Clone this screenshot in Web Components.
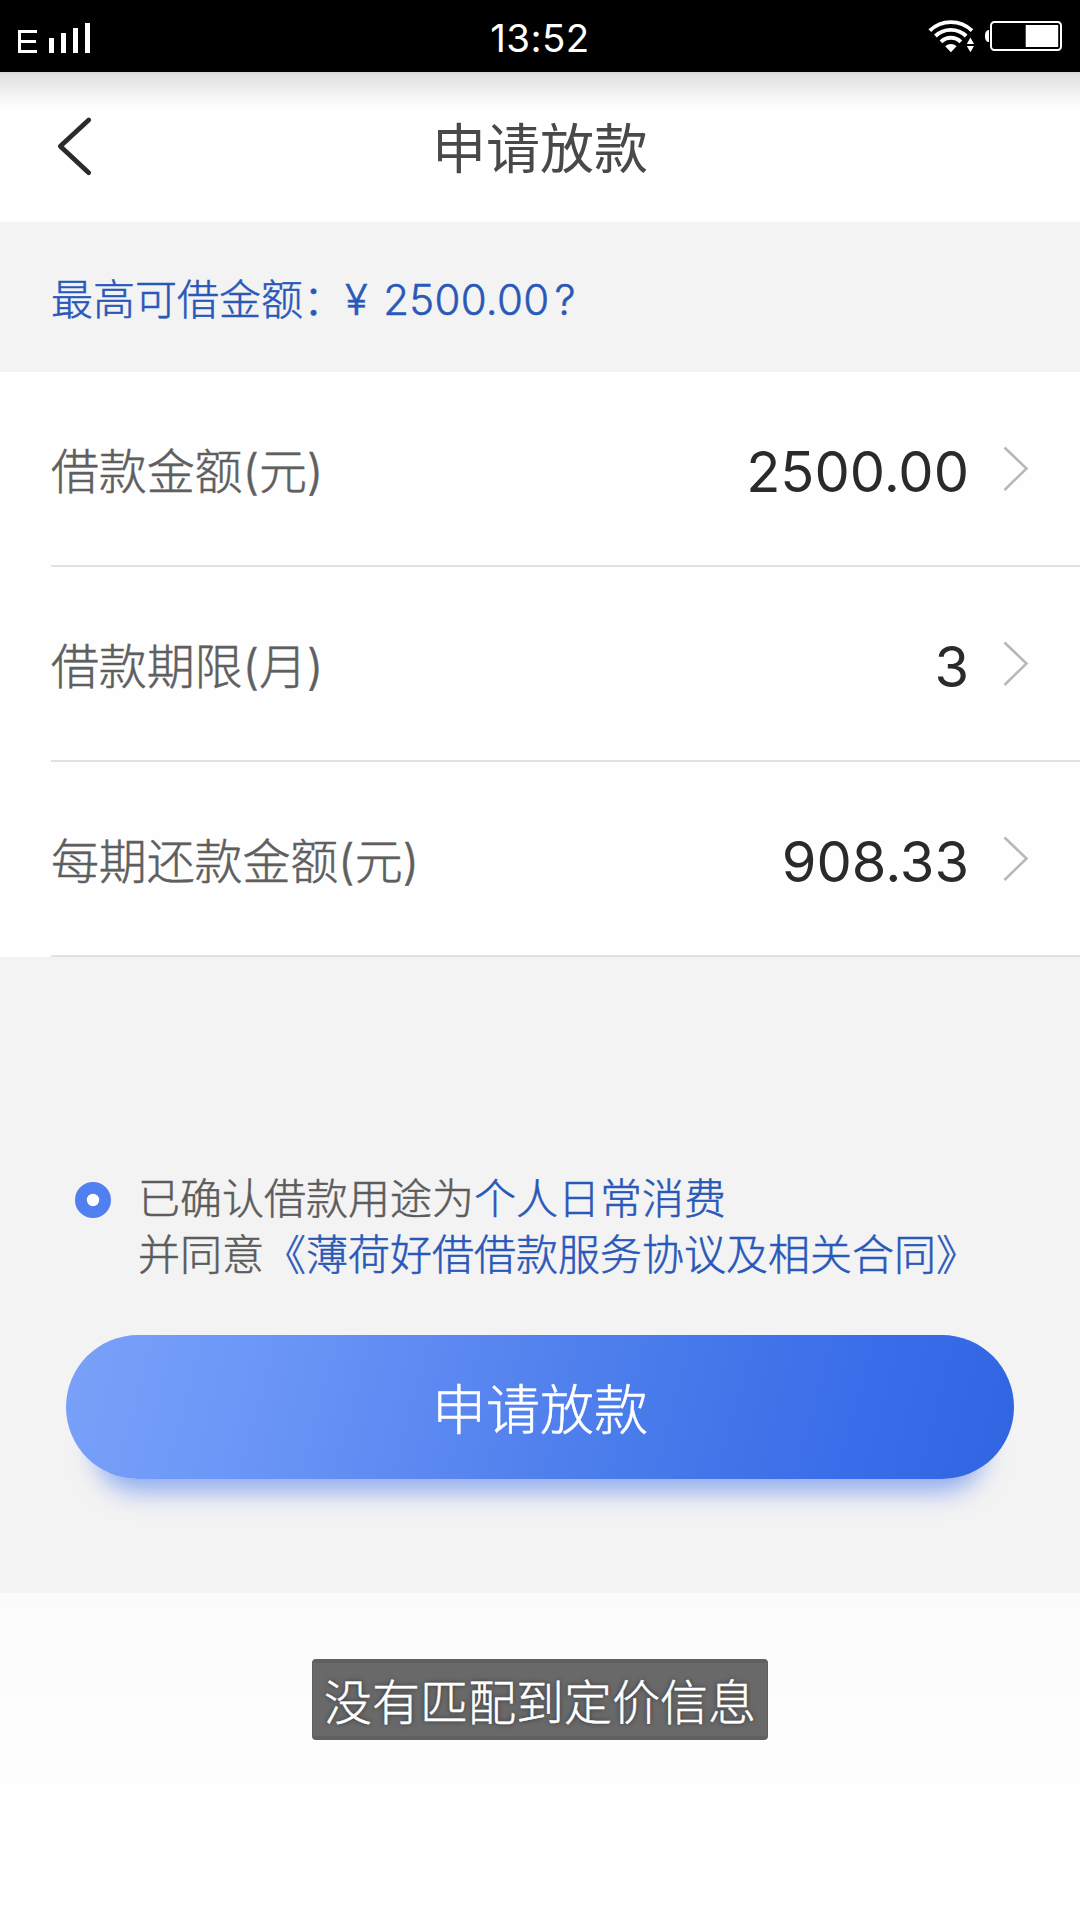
<!DOCTYPE html>
<html lang="zh-CN">
<head>
<meta charset="utf-8">
<title>申请放款</title>
<style>
html,body{margin:0;padding:0;background:#fcfcfc}
body{width:1080px;height:1920px;overflow:hidden;font-family:Inter,"Noto Sans CJK SC",sans-serif}
</style>
</head>
<body>
<loan-page>
  <status-bar>13:52</status-bar>
  <nav-header>申请放款</nav-header>
  <quota-note>最高可借金额：<span style="letter-spacing:1.8px">¥ </span><span style="letter-spacing:.3px">2500.00</span><span style="margin-left:5px">?</span></quota-note>
  <loan-row label="借款金额(元)">2500.00</loan-row>
  <loan-row label="借款期限(月)">3</loan-row>
  <loan-row label="每期还款金额(元)">908.33</loan-row>
  <loan-footer>
    <consent-box>
      <span slot="first">已确认借款用途为<link-text>个人日常消费</link-text></span>
      <span slot="second">并同意<link-text>《薄荷好借借款服务协议及相关合同》</link-text></span>
    </consent-box>
    <submit-button>申请放款</submit-button>
  </loan-footer>
  <toast-area>没有匹配到定价信息</toast-area>
</loan-page>
<script>
const define = (name, html, setup) => customElements.define(name, class extends HTMLElement {
  constructor() {
    super();
    this.attachShadow({ mode: 'open' }).innerHTML = html;
  }
  connectedCallback() { if (setup) setup(this, this.shadowRoot); }
});

define('loan-page', `
<style>:host{display:flex;flex-direction:column;width:1080px;height:1920px}</style><slot></slot>`);

define('status-bar', `
<style>
:host{display:grid;grid-template-columns:1fr auto 1fr;height:72px;background:#000;color:#fff}
svg{display:block}
.time{font-size:38.5px;line-height:72px;padding-top:2px;height:70px;letter-spacing:.4px}
.right{justify-self:end}
</style>
<svg width="120" height="72" fill="#fff"><path d="M18 30h19v3H21v7h15v3H21v7h16v3H18zM49 38h5v15h-5zM61 33h5v20h-5zM73 28h5v25h-5zM85 23h5v30h-5z"/></svg>
<div class="time"><slot></slot></div>
<svg class="right" width="160" height="72" viewBox="920 0 160 72">
  <g fill="none" stroke="#fff" stroke-width="3.9">
    <path d="M929.800 30.700A30.3 30.3 0 0 1 972 30.700"/>
    <path d="M935.4 36A22.3 22.3 0 0 1 966.2 36"/>
    <path d="M941 41.8A14.3 14.3 0 0 1 960.8 41.8"/>
  </g>
  <path fill="#fff" d="M950.9 52.3L945.2 46.3A8.2 8.2 0 0 1 956.6 46.3ZM970.4 37.5l3.6 6.5h-7.2zM970.4 52.2l3.6-6.3h-7.2z"/>
  <rect x="991" y="22" width="70" height="28" rx="3.5" fill="none" stroke="#fff" stroke-width="2"/>
  <path fill="#fff" d="M1025.7 25h32.5v22h-32.5zM989 30v12h-1q-3-1.500-3-5v-2q0-3.500 3-5z"/>
</svg>`);

define('nav-header', `
<style>
:host{display:grid;grid-template-columns:1fr auto 1fr;height:150px;color:#494949;
background:linear-gradient(#d6d6d6 0,#dfdfdf 3px,#ebebeb 14px,#f7f7f7 26px,#fff 40px)}
h1{margin:0;padding-top:4px;font-weight:400;font-size:54px;line-height:148px;height:146px}
svg{display:block}
</style>
<svg width="120" height="150" viewBox="0 72 120 150" fill="none" stroke="#2b2b2d" stroke-width="4.8" stroke-linecap="round" stroke-linejoin="round"><path d="M88.700 120L60.300 146.200L88.700 172.700"/></svg>
<h1><slot></slot></h1>`);

define('quota-note', `
<style>
:host{display:block;box-sizing:border-box;height:150px;padding:3px 0 0 51px;background:#f3f3f3;color:#2a58b8;font-size:42px;font-weight:300;-webkit-text-stroke:.5px #2a58b8;line-height:150px;white-space:nowrap}
</style><slot></slot>`);

define('loan-row', `
<style>
:host{display:block;background:#fefefe;padding-left:51px}
.row{display:flex;align-items:center;justify-content:space-between;box-sizing:border-box;height:195px;border-bottom:2px solid #e2e2e2;padding-right:51px}
.label{font-size:48px;font-weight:300;-webkit-text-stroke:.5px #5f5f5f;letter-spacing:-.15px;line-height:60px;color:#5f5f5f;padding-top:7px;white-space:nowrap}
.end{display:flex;align-items:center;gap:32px}
.value{font-size:56px;line-height:60px;color:#2a2a2a;padding-top:7px}
svg{display:block}
</style>
<div class="row"><span class="label"></span><span class="end"><span class="value"><slot></slot></span>
<svg width="28" height="48" fill="none" stroke="#b8b8b8" stroke-width="2.600"><path d="M3.500 2.500L25.500 23.500L3.500 45"/></svg></span></div>`,
(el, root) => { root.querySelector('.label').textContent = el.getAttribute('label'); });

define('loan-footer', `
<style>
:host{display:flex;flex-direction:column;box-sizing:border-box;height:636px;background:#f3f3f3;padding:213px 66px 0;gap:53px}
</style><slot></slot>`);

define('link-text', `<style>:host{color:#2a58b8}</style><slot></slot>`);

define('consent-box', `
<style>
:host{display:flex;gap:27px;height:112px;padding-left:9px;color:#5c5c5c;font-size:42px;font-weight:300;-webkit-text-stroke:.5px currentColor;line-height:56px;white-space:nowrap}
svg{display:block;margin-top:12px}
.lines{display:flex;flex-direction:column;padding-top:1px}
</style>
<svg width="36" height="36"><circle cx="18" cy="18" r="18" fill="#507ff0"/><circle cx="18" cy="18" r="6.200" fill="#fff"/></svg>
<div class="lines"><slot name="first"></slot><slot name="second"></slot></div>`);

define('submit-button', `
<style>
:host{display:block}
button{display:block;width:948px;height:144px;border:0;border-radius:72px;padding:7px 0 0;font:300 54px/137px Inter,"Noto Sans CJK SC",sans-serif;-webkit-text-stroke:.5px #fff;color:#fff;
background:linear-gradient(105deg,#7aa1f8 0%,#6c97f8 20%,#5a86f0 42%,#477aea 62%,#3a6de9 82%,#3164e1 100%);
box-shadow:0 42px 24px -29px rgba(80,125,235,.6)}
</style>
<button><slot></slot></button>`);

define('toast-area', `
<style>
:host{display:flex;flex:1;justify-content:center;align-items:flex-start;padding-top:66px;background:linear-gradient(#fbfbfb,#fefefe 60%)}
div{box-sizing:border-box;width:456px;height:81px;border-radius:4px;border:1px solid #606060;border-width:4px 1px;background:#696969;color:#fff;text-align:center;font-size:48px;font-weight:300;-webkit-text-stroke:.5px #fff;line-height:79px;text-shadow:0 0 5px rgba(0,0,0,.6)}
</style>
<div><slot></slot></div>`);
</script>
</body>
</html>
